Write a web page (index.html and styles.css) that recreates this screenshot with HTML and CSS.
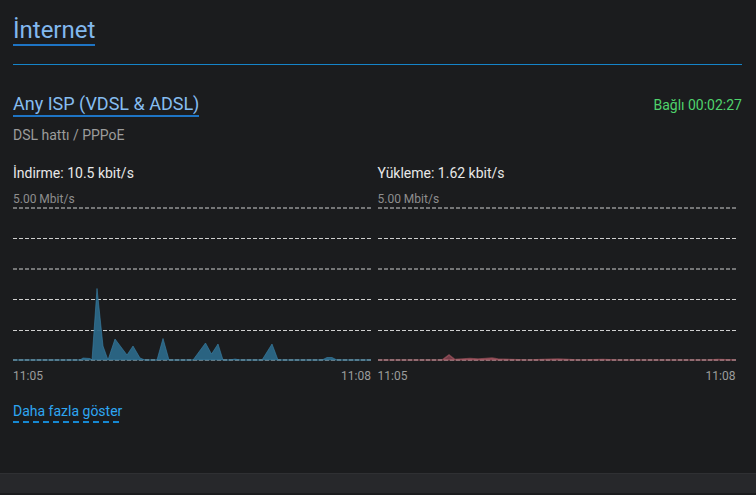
FILE: index.html
```html
<!DOCTYPE html>
<html lang="tr">
<head>
<meta charset="utf-8">
<title>İnternet</title>
<link rel="stylesheet" href="styles.css">
</head>
<body>
<main class="page">
  <header class="header">
    <h1 class="title">İnternet</h1>
  </header>
  <section class="conn">
    <div class="conn-row">
      <h2 class="isp">Any ISP (VDSL &amp; ADSL)</h2>
      <span class="status">Bağlı 00:02:27</span>
    </div>
    <div class="conn-type">DSL hattı / PPPoE</div>
    <div class="charts">
      <div class="chart-col">
        <div class="chart-title">İndirme: 10.5 kbit/s</div>
        <div class="chart-scale">5.00 Mbit/s</div>
        <svg class="chart" width="358" height="155" viewBox="0 0 358 155">
          <g class="grid">
            <line x1="0" y1="1" x2="358" y2="1"/>
            <line x1="0" y1="31.5" x2="358" y2="31.5"/>
            <line x1="0" y1="62" x2="358" y2="62"/>
            <line x1="0" y1="92.5" x2="358" y2="92.5"/>
            <line x1="0" y1="123.5" x2="358" y2="123.5"/>
            <line x1="0" y1="153" x2="358" y2="153"/>
          </g>
          <polygon class="area-down" points="0,153 67,153 70,151 77,151.5 79,153 84,81.5 90,139 95,153 102,132 114,148 120,139 127,151 132,153 144,153 150,131.5 156,153 180,153 192.5,136 198.5,147 205,137 210,153 217,153 222,152 227,153 249,153 259,137 265,153 309,153 314,150.5 319,150.5 324,153 358,153"/>
        </svg>
        <div class="chart-axis"><span>11:05</span><span>11:08</span></div>
      </div>
      <div class="chart-col">
        <div class="chart-title">Yükleme: 1.62 kbit/s</div>
        <div class="chart-scale">5.00 Mbit/s</div>
        <svg class="chart" width="358" height="155" viewBox="0 0 358 155">
          <g class="grid">
            <line x1="0" y1="1" x2="358" y2="1"/>
            <line x1="0" y1="31.5" x2="358" y2="31.5"/>
            <line x1="0" y1="62" x2="358" y2="62"/>
            <line x1="0" y1="92.5" x2="358" y2="92.5"/>
            <line x1="0" y1="123.5" x2="358" y2="123.5"/>
            <line x1="0" y1="153" x2="358" y2="153"/>
          </g>
          <polygon class="area-up" points="0,153 64,153 71,148 77,152.5 84,152 92,151.5 100,152 108,151.5 114,151 120,152 132,152.5 150,153 180,152 190,152.5 200,153 225,152.5 240,153 330,153 340,152.5 358,153"/>
        </svg>
        <div class="chart-axis"><span>11:05</span><span>11:08</span></div>
      </div>
    </div>
    <a class="more" href="#">Daha fazla göster</a>
  </section>
</main>
<footer class="footer"></footer>
</body>
</html>
```
FILE: styles.css
```css
* { box-sizing: border-box; }
html, body {
  margin: 0;
  padding: 0;
  background: #1b1c1e;
  font-family: Roboto, "Noto Sans", "Liberation Sans", sans-serif;
  color: #e6e6e6;
}
body {
  width: 756px;
  height: 495px;
  overflow: hidden;
}
.page {
  padding: 17px 14px 0 13px;
}
.header {
  border-bottom: 1px solid #1584c9;
  padding-bottom: 18px;
}
.title {
  display: inline-block;
  margin: 0;
  font-size: 24px;
  font-weight: 400;
  line-height: 27px;
  color: #82b8ee;
  border-bottom: 2px solid #1e74c4;
}
.conn {
  padding-top: 28px;
}
.conn-row {
  display: flex;
  justify-content: space-between;
  align-items: baseline;
}
.isp {
  margin: 0;
  font-size: 18px;
  font-weight: 400;
  line-height: 22px;
  color: #86bdf0;
  border-bottom: 2px solid #1e74c4;
}
.status {
  font-size: 14px;
  color: #4fd36c;
}
.conn-type {
  margin-top: 10px;
  font-size: 14px;
  line-height: 16px;
  color: #9c9c9c;
}
.charts {
  display: grid;
  grid-template-columns: 1fr 1fr;
  margin-top: 22px;
}
.chart-col {
  display: flex;
  flex-direction: column;
}
.chart-title {
  font-size: 14px;
  line-height: 17px;
  color: #e8e8e8;
}
.chart-scale {
  margin-top: 10px;
  font-size: 12px;
  line-height: 14px;
  color: #8e8e8e;
}
.chart {
  display: block;
  margin-top: 1px;
}
.grid line {
  stroke: #cfcfcf;
  stroke-width: 1;
  stroke-dasharray: 4 2;
}
.area-down {
  fill: #2b6787;
  fill-opacity: 0.95;
  stroke: #3b82a8;
  stroke-opacity: 0.6;
  stroke-width: 1;
}
.area-up {
  fill: #8a4652;
  fill-opacity: 0.8;
  stroke: #b8606c;
  stroke-opacity: 0.55;
  stroke-width: 1.5;
}
.chart-axis {
  display: flex;
  justify-content: space-between;
  width: 358px;
  margin-top: 7px;
  font-size: 12px;
  line-height: 14px;
  color: #9c9c9c;
}
.more {
  display: inline-block;
  margin-top: 20px;
  font-size: 14px;
  line-height: 17px;
  color: #2ea6f2;
  text-decoration: none;
  padding-bottom: 3px;
  background-image: linear-gradient(to right, #1689d4 60%, transparent 60%);
  background-size: 10px 2px;
  background-repeat: repeat-x;
  background-position: 0 100%;
}
.footer {
  margin-top: 50px;
  height: 20px;
  background: #27282b;
  border-top: 1px solid #2f3033;
}
```
